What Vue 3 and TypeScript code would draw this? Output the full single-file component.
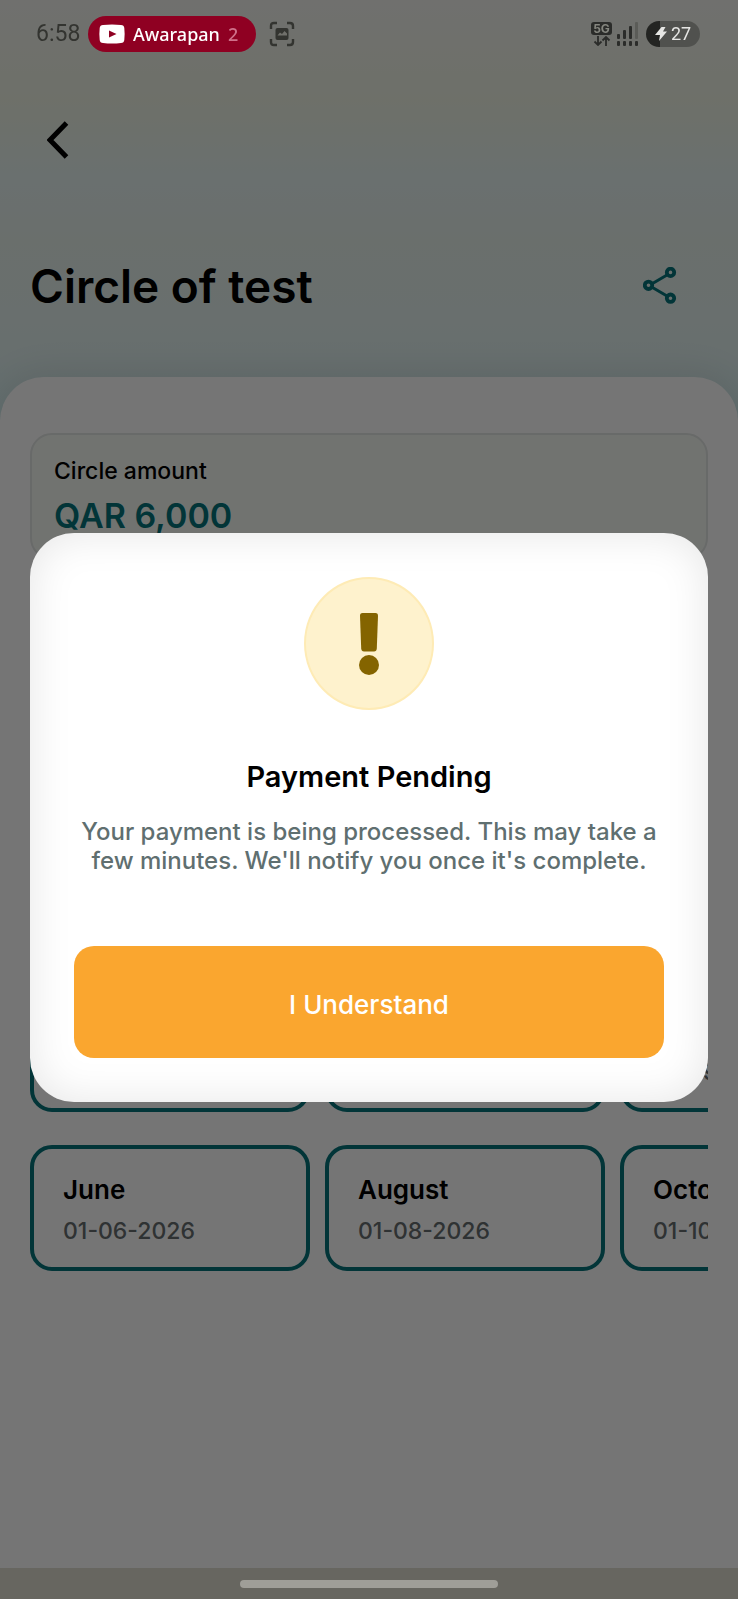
<script setup lang="ts">
import { ref } from 'vue'

interface Slot {
  month: string
  date: string
}

const circleName = 'Circle of test'
const amount = 'QAR 6,000'
const dialogOpen = ref(true)

const slots: Slot[] = [
  { month: 'May', date: '01-05-2026' },
  { month: 'June', date: '01-06-2026' },
  { month: 'July', date: '01-07-2026' },
  { month: 'August', date: '01-08-2026' },
  { month: 'September', date: '01-09-2026' },
  { month: 'October', date: '01-10-2026' },
]
</script>

<template>
  <div class="screen">
    <div class="status-bar">
      <span class="clock">6:58</span>
      <div class="media-pill">
        <svg width="26" height="20" viewBox="0 0 26 20" aria-hidden="true">
          <path d="M4 1Q13 0 22 1Q25 1 25.300 4Q26 10 25.300 16Q25 19 22 19Q13 20 4 19Q1 19 .7 16Q0 10 .7 4Q1 1 4 1Z" fill="#fff" />
          <path d="M10 6.500 17.500 10 10 13.500Z" fill="#8f0022" />
        </svg>
        <span>Awarapan</span>
        <span class="faded">2</span>
      </div>
      <svg class="capture" width="26" height="26" viewBox="0 0 26 26" aria-hidden="true">
        <path d="M2 8V5Q2 2 5 2H8M18 2H21Q24 2 24 5V8M24 18V21Q24 24 21 24H18M8 24H5Q2 24 2 21V18" fill="none" stroke="#333430" stroke-width="2.400" />
        <rect x="6.500" y="7" width="13" height="12" rx="2" fill="#333430" />
        <path d="M8.500 14.500 11 11.500l2 1.500L15.500 10l2.500 2.500V14.500Z" fill="#70706b" />
      </svg>
      <div class="indicators">
        <div class="network">
          <span class="five-g">5G</span>
          <svg width="18" height="10" viewBox="0 0 18 10" aria-hidden="true">
            <path d="M5 0V8.500M1.500 5.500 5 9 8.500 5.500M13 10V1.500M9.500 4.500 13 1l3.500 3.500" fill="none" stroke="#2b2c2a" stroke-width="1.800" />
          </svg>
        </div>
        <svg width="22" height="24" viewBox="0 0 22 24" aria-hidden="true">
          <g fill="#2b2c2a">
            <rect x="0" y="12" width="3" height="5" rx="1" />
            <rect x="6" y="8" width="3" height="9" rx="1" />
            <rect x="12" y="4" width="3" height="13" rx="1" />
            <rect x="0" y="19" width="3" height="5" rx="1" />
            <rect x="6" y="19" width="3" height="5" rx="1" />
            <rect x="12" y="19" width="3" height="5" rx="1" />
            <rect x="18" y="19" width="3" height="5" rx="1" />
          </g>
          <rect x="18" y="0" width="3" height="17" rx="1" fill="#5b5c58" />
        </svg>
        <div class="battery">
          <svg width="12" height="14" viewBox="0 0 12 14" aria-hidden="true">
            <path d="M6.500 0H10.500L8 4.500H12L4 14 5 8H0Z" fill="#e6e6e4" />
          </svg>
          <span>27</span>
        </div>
      </div>
    </div>

    <header class="header">
      <button class="icon-button" type="button" aria-label="Back">
        <svg width="22" height="38" viewBox="0 0 22 38" aria-hidden="true">
          <path d="M19.500 2 3 19 19.500 36" fill="none" stroke="#000" stroke-width="5" />
        </svg>
      </button>
      <div class="title-row">
        <h1>{{ circleName }}</h1>
        <button class="icon-button" type="button" aria-label="Share">
          <svg width="34" height="38" viewBox="0 0 34 38" fill="none" stroke="#06737a" aria-hidden="true">
            <path d="M9.500 16.500 24 8M9.500 20.500 24 29" stroke-width="3" />
            <g stroke-width="3.800">
              <circle cx="5.500" cy="18.300" r="3.700" />
              <circle cx="27.500" cy="5.400" r="3.700" />
              <circle cx="27.500" cy="31.200" r="3.700" />
            </g>
          </svg>
        </button>
      </div>
    </header>

    <main class="panel">
      <section class="summary">
        <span class="label">Circle amount</span>
        <strong>{{ amount }}</strong>
      </section>
      <section class="schedule" aria-label="Payout months">
        <button v-for="slot in slots" :key="slot.month" class="slot" type="button">
          <span class="month">{{ slot.month }}</span>
          <span class="date">{{ slot.date }}</span>
        </button>
      </section>
    </main>

    <div class="home-bar"><span class="handle"></span></div>

    <div v-if="dialogOpen" class="backdrop">
      <div class="dialog" role="alertdialog" aria-modal="true" aria-labelledby="dialog-title" aria-describedby="dialog-text">
        <div class="badge">
          <svg width="24" height="62" viewBox="0 0 24 62" fill="#846400" aria-hidden="true">
            <path d="M5.500 0H18.500Q21.100 0 21 3L19.800 35.500Q19.600 38.500 17 38.500H7Q4.400 38.500 4.200 35.500L3 3Q2.900 0 5.500 0Z" />
            <circle cx="12" cy="52" r="10" />
          </svg>
        </div>
        <h2 id="dialog-title">Payment Pending</h2>
        <p id="dialog-text">Your payment is being processed. This may take a few minutes. We'll notify you once it's complete.</p>
        <button class="confirm" type="button" @click="dialogOpen = false">I Understand</button>
      </div>
    </div>
  </div>
</template>

<style>
body {
  margin: 0;
}
</style>

<style scoped>
.screen {
  box-sizing: border-box;
  min-height: 100vh;
  display: flex;
  flex-direction: column;
  font-family: Inter, "Liberation Sans", sans-serif;
  font-weight: 500;
  color: #000;
  background: linear-gradient(#f3f3f0 0, #eff3e5 100px, #e7f3f2 180px, #e6f1ec 240px, #e5f2ef 310px, #e1f1f0 360px, #d3f0f1 430px);
}

button {
  margin: 0;
  padding: 0;
  border: 0;
  background: none;
  font: inherit;
  color: inherit;
  cursor: pointer;
}

.status-bar {
  position: relative;
  z-index: 2;
  box-sizing: border-box;
  height: 68px;
  padding: 0 38px 0 36px;
  display: flex;
  align-items: center;
  color: #333430;
}

.clock {
  width: 52px;
  font: 400 23px/36px Roboto, sans-serif;
}

.media-pill {
  box-sizing: border-box;
  height: 36px;
  padding: 0 18px 0 11px;
  display: flex;
  align-items: center;
  gap: 8px;
  border-radius: 18px;
  background: #8f0022;
  color: #fff;
  font: 500 18px/36px "Noto Sans", sans-serif;
}

.faded {
  color: #d0708a;
}

.capture {
  margin-left: 13px;
}

.indicators {
  margin-left: auto;
  display: flex;
  align-items: center;
}

.network {
  width: 21px;
  margin-right: 5px;
  display: flex;
  flex-direction: column;
  align-items: center;
  gap: 1px;
}

.five-g {
  width: 21px;
  border-radius: 3px;
  background: #2b2c2a;
  color: #85867f;
  font-size: 12px;
  font-weight: 700;
  line-height: 13px;
  text-align: center;
}

.battery {
  box-sizing: border-box;
  width: 54px;
  height: 26px;
  margin-left: 7px;
  padding-left: 9px;
  display: flex;
  align-items: center;
  gap: 4px;
  border-radius: 13px;
  background: linear-gradient(90deg, #232422 14px, #50514e 14px);
  color: #e6e6e4;
  font: 400 18px/26px Roboto, sans-serif;
}

.header {
  padding: 44px 30px 63px;
}

.icon-button {
  width: 56px;
  height: 56px;
  display: grid;
  place-items: center;
}

.title-row {
  margin-top: 90px;
  padding-right: 20px;
  display: flex;
  align-items: center;
  justify-content: space-between;
}

h1 {
  margin: 0;
  font-size: 46px;
  font-weight: 600;
  line-height: 56px;
}

.panel {
  flex: 1;
  padding: 56px 30px 30px;
  border-radius: 44px 44px 0 0;
  background: #fff;
  box-shadow: 0 0 40px rgba(0, 0, 0, 0.1);
}

.summary {
  box-sizing: border-box;
  min-height: 126px;
  padding: 22px;
  display: flex;
  flex-direction: column;
  gap: 11px;
  border: 2px solid #e3e6e4;
  border-radius: 22px;
  background: #f7faf5;
}

.label {
  font-size: 23px;
  line-height: 28px;
}

.summary strong {
  font-size: 34px;
  font-weight: 600;
  line-height: 40px;
  color: #06737a;
}

.schedule {
  margin-top: 426px;
  display: grid;
  grid-auto-flow: column;
  grid-template-rows: repeat(2, 126px);
  grid-auto-columns: 280px;
  gap: 33px 15px;
  overflow-x: auto;
  scrollbar-width: none;
}

.slot {
  padding: 3px 29px 0;
  display: flex;
  flex-direction: column;
  justify-content: center;
  gap: 11px;
  border: 4px solid #06737a;
  border-radius: 22px;
  text-align: left;
}

.month {
  font-size: 26px;
  font-weight: 600;
  line-height: 32px;
}

.date {
  font-size: 23px;
  line-height: 28px;
  color: #666e6f;
}

.home-bar {
  position: relative;
  z-index: 2;
  height: 31px;
  display: grid;
  place-items: center;
  background: #676660;
}

.handle {
  width: 35%;
  height: 8px;
  border-radius: 4px;
  background: #9f9e98;
}

.backdrop {
  position: fixed;
  inset: 0;
  z-index: 1;
  box-sizing: border-box;
  padding: 36px 30px 0;
  display: grid;
  align-items: center;
  background: rgba(0, 0, 0, 0.54);
}

.dialog {
  padding: 44px;
  display: flex;
  flex-direction: column;
  align-items: center;
  border-radius: 44px;
  background: #fff;
  box-shadow: inset 0 0 44px rgba(0, 0, 0, 0.1);
  text-align: center;
}

.badge {
  box-sizing: border-box;
  width: 130px;
  height: 133px;
  display: grid;
  place-items: center;
  border: 2px solid #feebb5;
  border-radius: 50%;
  background: #fef2cd;
}

h2 {
  margin: 49px 0 0;
  font-size: 29px;
  font-weight: 600;
  line-height: 36px;
}

p {
  margin: 22px 0 0;
  font-size: 24px;
  line-height: 29px;
  color: #5f6f70;
}

.confirm {
  align-self: stretch;
  height: 112px;
  margin-top: 71px;
  padding-top: 4px;
  border-radius: 20px;
  background: #faa62f;
  color: #fff;
  font-size: 26px;
}
</style>
